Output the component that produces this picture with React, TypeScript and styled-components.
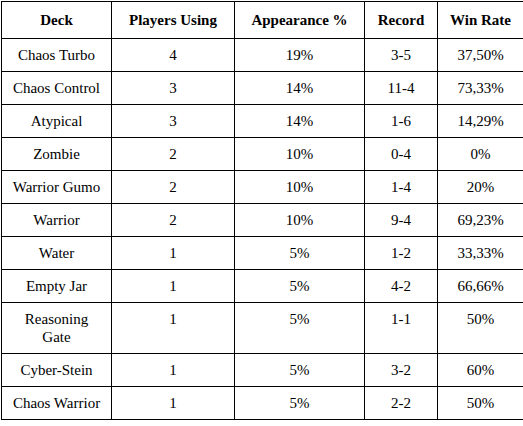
import React from "react";
import styled, { createGlobalStyle } from "styled-components";

const GlobalStyle = createGlobalStyle`
  body {
    margin: 0;
    padding: 1px;
    background: #ffffff;
  }
`;

const Table = styled.table`
  border-collapse: collapse;
  table-layout: fixed;
  width: 522px;
  color: #000;
`;

const HeadCell = styled.th`
  border: 1px solid #000;
  padding: 9px 6px;
  font-family: "Times New Roman", Times, "Liberation Serif", serif;
  font-size: 15px;
  font-weight: bold;
  text-align: center;
  line-height: 18px;
`;

const Cell = styled.td`
  border: 1px solid #000;
  padding: 7px 8px;
  font-family: "Times New Roman", Times, "Liberation Serif", serif;
  font-size: 15px;
  text-align: center;
  vertical-align: top;
  line-height: 18px;
`;

const columns = [
  { title: "Deck", width: 110 },
  { title: "Players Using", width: 123 },
  { title: "Appearance %", width: 130 },
  { title: "Record", width: 73 },
  { title: "Win Rate", width: 86 },
];

const rows: [string, number, string, string, string][] = [
  ["Chaos Turbo", 4, "19%", "3-5", "37,50%"],
  ["Chaos Control", 3, "14%", "11-4", "73,33%"],
  ["Atypical", 3, "14%", "1-6", "14,29%"],
  ["Zombie", 2, "10%", "0-4", "0%"],
  ["Warrior Gumo", 2, "10%", "1-4", "20%"],
  ["Warrior", 2, "10%", "9-4", "69,23%"],
  ["Water", 1, "5%", "1-2", "33,33%"],
  ["Empty Jar", 1, "5%", "4-2", "66,66%"],
  ["Reasoning Gate", 1, "5%", "1-1", "50%"],
  ["Cyber-Stein", 1, "5%", "3-2", "60%"],
  ["Chaos Warrior", 1, "5%", "2-2", "50%"],
];

const App = () => {
  return (
    <>
      <GlobalStyle />
      <Table>
        <colgroup>
          {columns.map((c) => (
            <col key={c.title} style={{ width: c.width }} />
          ))}
        </colgroup>
        <thead>
          <tr>
            {columns.map((c) => (
              <HeadCell key={c.title}>{c.title}</HeadCell>
            ))}
          </tr>
        </thead>
        <tbody>
          {rows.map((r) => (
            <tr key={r[0]}>
              {r.map((v, i) => (
                <Cell key={i}>{v}</Cell>
              ))}
            </tr>
          ))}
        </tbody>
      </Table>
    </>
  );
};

export default App;
